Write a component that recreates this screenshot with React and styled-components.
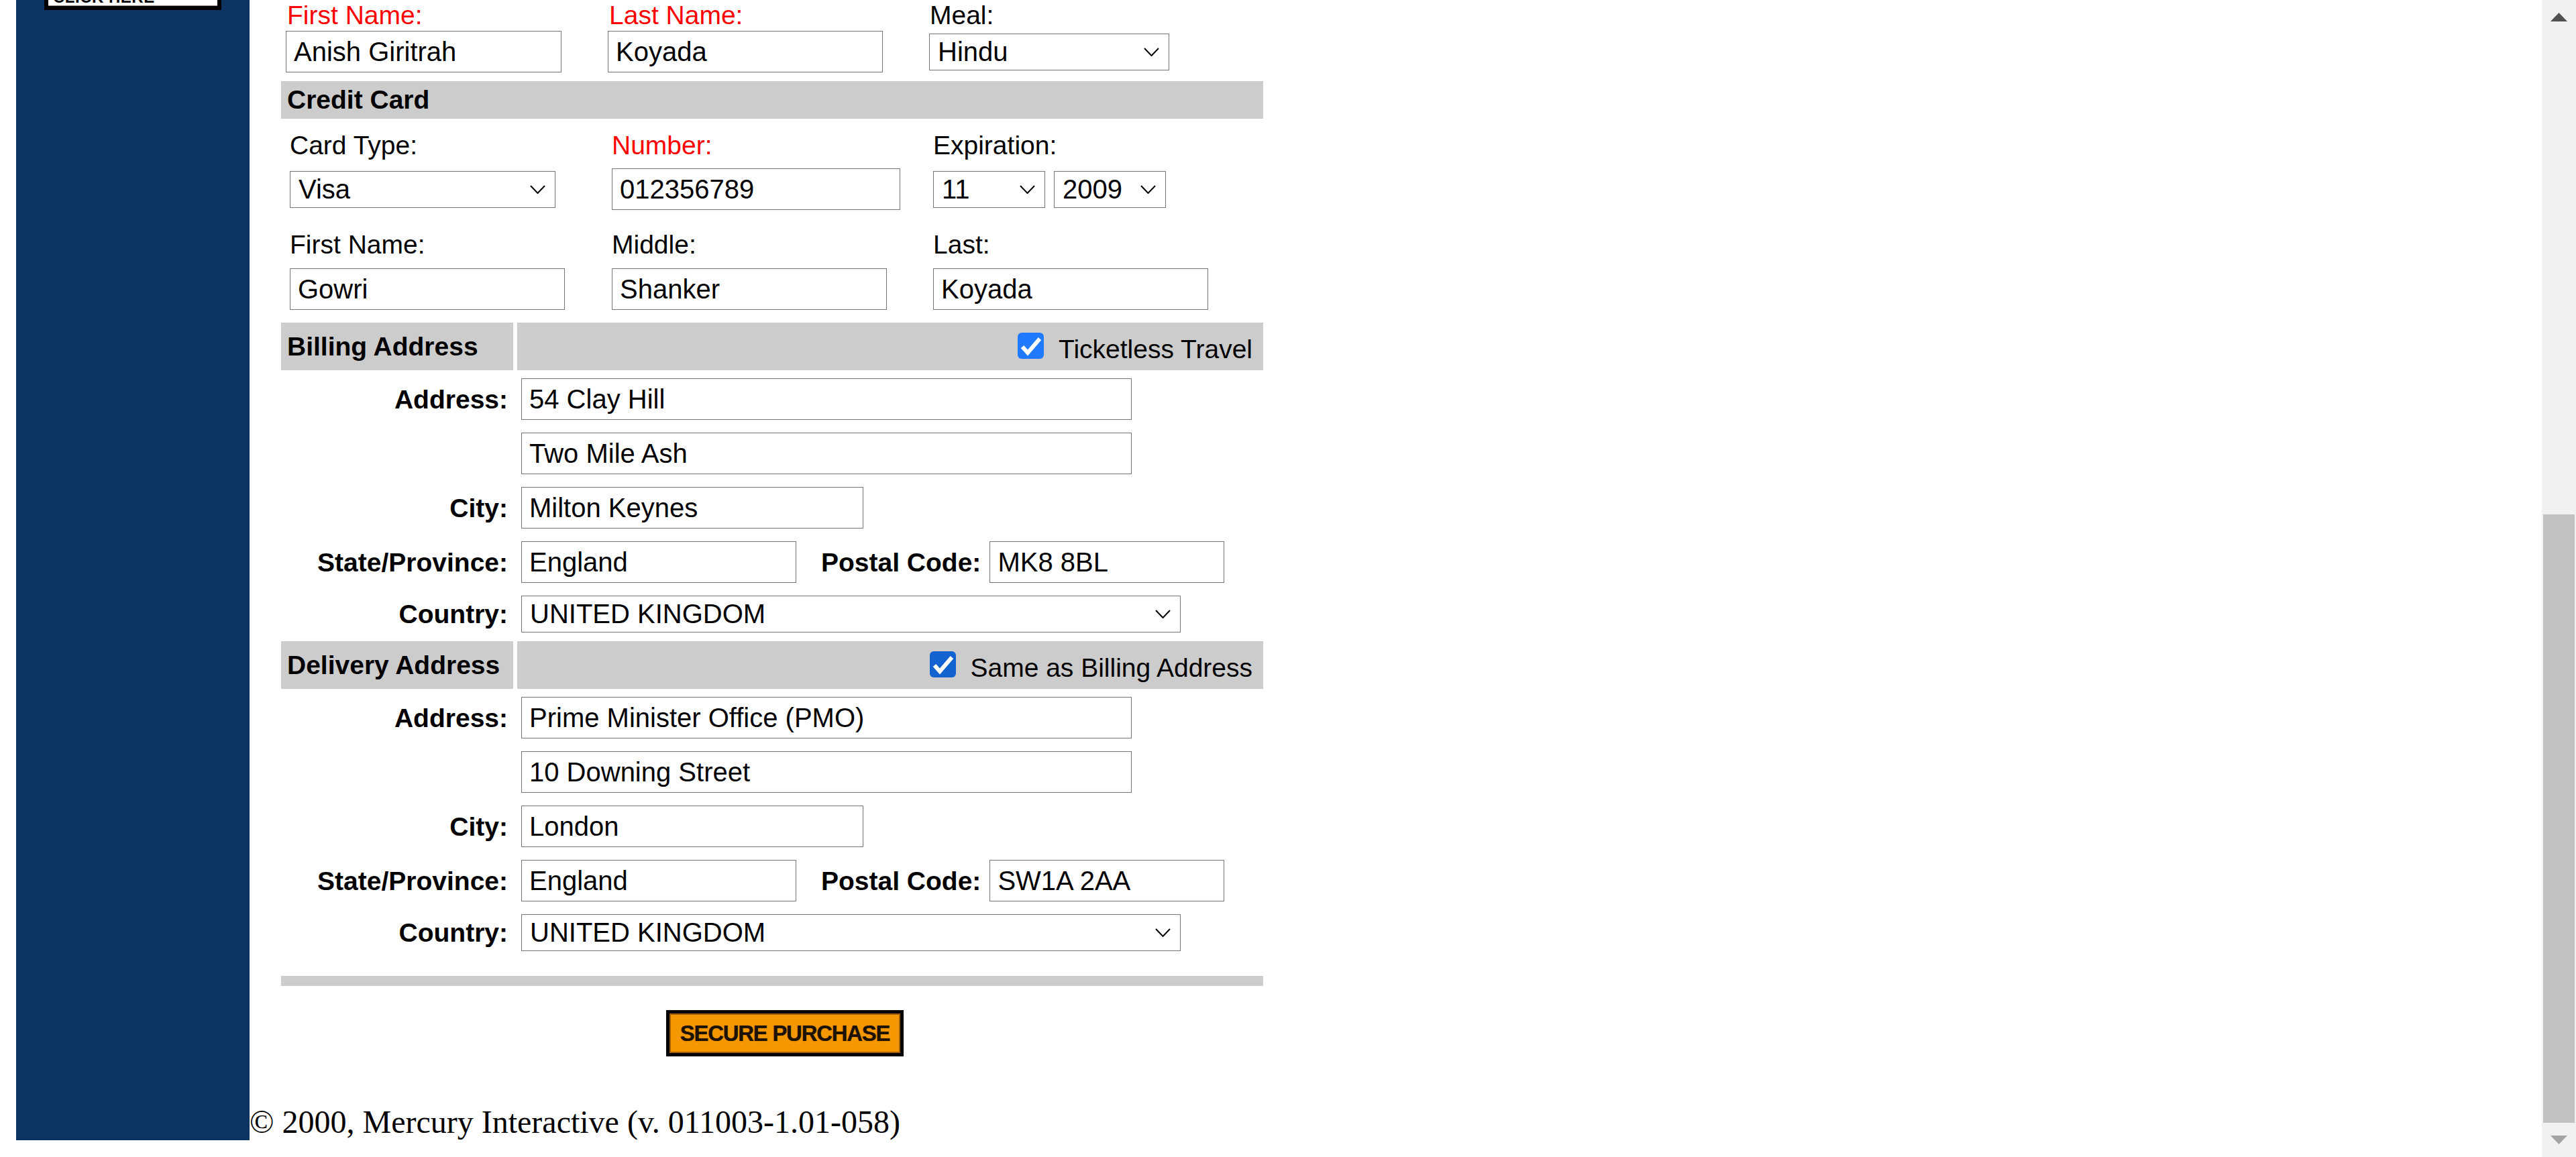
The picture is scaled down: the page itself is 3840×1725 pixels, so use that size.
import styled, { createGlobalStyle } from 'styled-components';

/* ============ GLOBAL ============ */

const GlobalStyle = createGlobalStyle`
  html, body {
    margin: 0;
    padding: 0;
    overflow: hidden;
    background: #fff;
  }
  body {
    font-family: "Liberation Sans", Arial, sans-serif;
    color: #000;
  }
`;

/* ============ STYLED ============ */

const Screen = styled.div`
  width: 3840px;
  height: 1725px;
  display: flex;
  overflow: hidden;
`;

const Page = styled.div`
  flex: 1;
  min-width: 0;
  display: flex;
  align-items: stretch;
  padding: 0 0 25px 24px;
  overflow: hidden;
`;

const Sidebar = styled.div`
  width: 348px;
  flex-shrink: 0;
  background: #0b3463;
`;

/* the page is scrolled: only the foot of this button is still in view */
const ClickClip = styled.div`
  width: 264px;
  height: 15px;
  margin-left: 42px;
  overflow: hidden;
  display: flex;
  flex-direction: column;
  justify-content: flex-end;
`;

const ClickOuter = styled.div`
  flex-shrink: 0;
  background: #000;
  padding: 6px;
`;

const ClickInner = styled.div`
  height: 40px;
  display: flex;
  align-items: flex-end;
  padding-left: 7px;
  background: #fff;
  border-bottom: 1px solid #8a8a8a;
  font-size: 24px;
  line-height: 24px;
  font-weight: 700;
  letter-spacing: 0.5px;
`;

const Main = styled.div`
  display: flex;
  flex-direction: column;
`;

const Form = styled.div`
  width: 1464px;
  margin-left: 47px;
  display: flex;
  flex-direction: column;
`;

const FieldGrid = styled.div`
  display: grid;
  grid-template-columns: 480px 479px 1fr;
  padding-left: ${({ $pad }) => $pad}px;
  margin-top: ${({ $top }) => $top || 0}px;
`;

const FieldCell = styled.div`
  display: flex;
  flex-direction: column;
`;

const Label = styled.div`
  font-size: 39px;
  line-height: 45px;
  color: ${({ $required }) => ($required ? '#ff0000' : '#000')};
  margin-bottom: ${({ $gap }) => $gap}px;
  padding-left: ${({ $indent }) => $indent || 0}px;
  white-space: nowrap;
`;

const FieldLine = styled.div`
  height: 62px;
  display: flex;
  align-items: center;
  gap: 13px;
`;

const TextInput = styled.input`
  width: ${({ $w }) => $w}px;
  height: 62px;
  box-sizing: border-box;
  margin: 0;
  padding: 0 11px;
  border: 1px solid #767676;
  border-radius: 0;
  background: #fff;
  font-family: "Liberation Sans", Arial, sans-serif;
  font-size: 40px;
  color: #000;
  outline: none;
  flex-shrink: 0;
`;

const SelectBox = styled.div`
  width: ${({ $w }) => $w}px;
  height: 55px;
  box-sizing: border-box;
  border: 1px solid #767676;
  background: #fff;
  display: flex;
  align-items: center;
  justify-content: space-between;
  padding: 0 14px 0 12px;
  font-size: 40px;
  flex-shrink: 0;
  cursor: default;
`;

const Band = styled.div`
  height: 56px;
  box-sizing: border-box;
  margin-top: ${({ $top }) => $top}px;
  padding: 5px 9px 0;
  background: #cccccc;
  font-size: 39px;
  line-height: 45px;
  font-weight: 700;
`;

const SplitBand = styled.div`
  display: grid;
  grid-template-columns: 346px 1fr;
  column-gap: 6px;
  height: 71px;
  margin-top: ${({ $top }) => $top}px;
`;

const BandTitle = styled.div`
  background: #cccccc;
  display: flex;
  align-items: center;
  padding-left: 9px;
  font-size: 39px;
  line-height: 45px;
  font-weight: 700;
  white-space: nowrap;
`;

const BandOption = styled.label`
  background: #cccccc;
  display: flex;
  align-items: flex-start;
  justify-content: flex-end;
  gap: ${({ $gap }) => $gap}px;
  padding-right: 16px;
  font-size: 39px;
  line-height: 45px;
`;

const CheckMark = styled.span`
  width: 39px;
  height: 39px;
  margin-top: 15px;
  border-radius: 6px;
  background: ${({ $tone }) => $tone};
  display: flex;
  flex-shrink: 0;

  svg {
    width: 39px;
    height: 39px;
  }
`;

const OptionText = styled.span`
  margin-top: 17px;
  white-space: nowrap;
`;

const AddressGrid = styled.div`
  display: grid;
  grid-template-columns: 346px 1fr;
  column-gap: 6px;
  row-gap: 19px;
  margin-top: 12px;
`;

const RowLabel = styled.div`
  align-self: center;
  text-align: right;
  padding-right: 8px;
  font-size: 39px;
  line-height: 45px;
  font-weight: 700;
  white-space: nowrap;
`;

const RowField = styled.div`
  padding-left: 6px;
  display: flex;
  align-items: center;
`;

const InlineLabel = styled.span`
  margin: 0 13px 0 37px;
  font-size: 39px;
  line-height: 45px;
  font-weight: 700;
  white-space: nowrap;
`;

const Divider = styled.div`
  height: 15px;
  margin-top: 37px;
  background: #cccccc;
`;

const PurchaseButton = styled.button`
  width: 354px;
  height: 69px;
  margin: 36px 0 0 574px;
  padding: 0;
  box-sizing: border-box;
  border: 5px solid #000;
  background: #f59700;
  box-shadow: inset 0 0 0 2px #a15c00;
  font-family: "Liberation Sans", Arial, sans-serif;
  font-size: 33px;
  font-weight: 700;
  letter-spacing: -1.3px;
  color: #1d1200;
  text-shadow: 0 0 1px rgba(40, 20, 0, 0.7);
  cursor: pointer;
`;

const Footer = styled.div`
  margin-top: 70px;
  font-family: "Liberation Serif", "Times New Roman", serif;
  font-size: 48px;
  line-height: 55px;
  white-space: nowrap;
`;

const Scrollbar = styled.div`
  width: 51px;
  flex-shrink: 0;
  background: #f1f1f1;
  display: flex;
  flex-direction: column;
`;

const ScrollButton = styled.div`
  height: 51px;
  flex-shrink: 0;
  display: flex;
  align-items: center;
  justify-content: center;

  svg {
    width: 25px;
    height: 13px;
  }
`;

const ScrollTrack = styled.div`
  flex: 1;
  display: flex;
  flex-direction: column;
  justify-content: flex-end;
`;

const Thumb = styled.div`
  height: 907px;
  margin: 0 2px;
  background: #c1c1c1;
`;

/* ============ PARTS ============ */

function Chevron() {
  return (
    <svg width="23" height="13" viewBox="0 0 23 13">
      <polyline points="1,1 11.5,12 22,1" fill="none" stroke="#000" strokeWidth="2" />
    </svg>
  );
}

function Select({ w, value }) {
  return (
    <SelectBox $w={w}>
      <span>{value}</span>
      <Chevron />
    </SelectBox>
  );
}

function Check({ tone }) {
  return (
    <CheckMark $tone={tone}>
      <svg viewBox="0 0 39 39">
        <polyline points="7,21 15,30 33,9" fill="none" stroke="#fff" strokeWidth="6" />
      </svg>
    </CheckMark>
  );
}

function AddressBlock({ lines, city, state, postal, country }) {
  return (
    <AddressGrid>
      <RowLabel>Address:</RowLabel>
      <RowField><TextInput $w={910} defaultValue={lines[0]} /></RowField>
      <div />
      <RowField><TextInput $w={910} defaultValue={lines[1]} /></RowField>
      <RowLabel>City:</RowLabel>
      <RowField><TextInput $w={510} defaultValue={city} /></RowField>
      <RowLabel>State/Province:</RowLabel>
      <RowField>
        <TextInput $w={410} defaultValue={state} />
        <InlineLabel>Postal Code:</InlineLabel>
        <TextInput $w={350} defaultValue={postal} />
      </RowField>
      <RowLabel>Country:</RowLabel>
      <RowField><Select w={983} value={country} /></RowField>
    </AddressGrid>
  );
}

/* ============ COMPONENT ============ */

export default function App() {
  return (
    <>
      <GlobalStyle />
      <Screen>
        <Page>
          <Sidebar>
            <ClickClip>
              <ClickOuter>
                <ClickInner>CLICK HERE</ClickInner>
              </ClickOuter>
            </ClickClip>
          </Sidebar>

          <Main>
            <Form>
              <FieldGrid $pad={7}>
                <FieldCell>
                  <Label $required $gap={1} $indent={2}>First Name:</Label>
                  <FieldLine><TextInput $w={411} defaultValue="Anish Giritrah" /></FieldLine>
                </FieldCell>
                <FieldCell>
                  <Label $required $gap={1} $indent={2}>Last Name:</Label>
                  <FieldLine><TextInput $w={410} defaultValue="Koyada" /></FieldLine>
                </FieldCell>
                <FieldCell>
                  <Label $gap={1} $indent={1}>Meal:</Label>
                  <FieldLine><Select w={358} value="Hindu" /></FieldLine>
                </FieldCell>
              </FieldGrid>

              <Band $top={13}>Credit Card</Band>

              <FieldGrid $pad={13} $top={17}>
                <FieldCell>
                  <Label $gap={12}>Card Type:</Label>
                  <FieldLine><Select w={396} value="Visa" /></FieldLine>
                </FieldCell>
                <FieldCell>
                  <Label $required $gap={12}>Number:</Label>
                  <FieldLine><TextInput $w={430} defaultValue="012356789" /></FieldLine>
                </FieldCell>
                <FieldCell>
                  <Label $gap={12}>Expiration:</Label>
                  <FieldLine>
                    <Select w={167} value="11" />
                    <Select w={167} value="2009" />
                  </FieldLine>
                </FieldCell>
              </FieldGrid>

              <FieldGrid $pad={13} $top={29}>
                <FieldCell>
                  <Label $gap={13}>First Name:</Label>
                  <FieldLine><TextInput $w={410} defaultValue="Gowri" /></FieldLine>
                </FieldCell>
                <FieldCell>
                  <Label $gap={13}>Middle:</Label>
                  <FieldLine><TextInput $w={410} defaultValue="Shanker" /></FieldLine>
                </FieldCell>
                <FieldCell>
                  <Label $gap={13}>Last:</Label>
                  <FieldLine><TextInput $w={410} defaultValue="Koyada" /></FieldLine>
                </FieldCell>
              </FieldGrid>

              <SplitBand $top={19}>
                <BandTitle>Billing Address</BandTitle>
                <BandOption $gap={22}>
                  <Check tone="#1f7aff" />
                  <OptionText>Ticketless Travel</OptionText>
                </BandOption>
              </SplitBand>

              <AddressBlock
                lines={['54 Clay Hill', 'Two Mile Ash']}
                city="Milton Keynes"
                state="England"
                postal="MK8 8BL"
                country="UNITED KINGDOM"
              />

              <SplitBand $top={13}>
                <BandTitle>Delivery Address</BandTitle>
                <BandOption $gap={21}>
                  <Check tone="#1262cf" />
                  <OptionText>Same as Billing Address</OptionText>
                </BandOption>
              </SplitBand>

              <AddressBlock
                lines={['Prime Minister Office (PMO)', '10 Downing Street']}
                city="London"
                state="England"
                postal="SW1A 2AA"
                country="UNITED KINGDOM"
              />

              <Divider />
              <div>
                <PurchaseButton type="button">SECURE PURCHASE</PurchaseButton>
              </div>
            </Form>

            <Footer>© 2000, Mercury Interactive (v. 011003-1.01-058)</Footer>
          </Main>
        </Page>

        <Scrollbar>
          <ScrollButton>
            <svg viewBox="0 0 25 13">
              <polygon points="12.5,0 25,13 0,13" fill="#505050" />
            </svg>
          </ScrollButton>
          <ScrollTrack>
            <Thumb />
          </ScrollTrack>
          <ScrollButton>
            <svg viewBox="0 0 25 13">
              <polygon points="0,0 25,0 12.5,13" fill="#a3a3a3" />
            </svg>
          </ScrollButton>
        </Scrollbar>
      </Screen>
    </>
  );
}
